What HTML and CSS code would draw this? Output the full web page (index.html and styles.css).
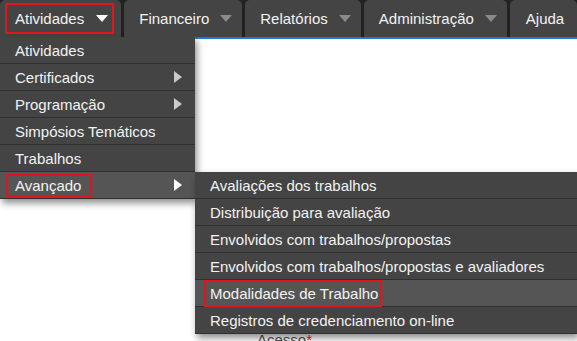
FILE: index.html
```html
<!DOCTYPE html>
<html>
<head>
    <meta charset="utf-8" />
    <title>Menu</title>
    <link rel="stylesheet" href="styles.css">
</head>
<body>
<div class="topbar">
    <ul class="tabs">
        <li class="tab open">
            <span class="hl hl-tab">Atividades <i class="caret"></i></span>
            <ul class="dropdown">
                <li>Atividades</li>
                <li>Certificados <i class="arrow"></i></li>
                <li>Programação <i class="arrow"></i></li>
                <li>Simpósios Temáticos</li>
                <li>Trabalhos</li>
                <li class="active"><span class="hl hl-adv">Avançado</span> <i class="arrow"></i>
                    <ul class="submenu">
                        <li>Avaliações dos trabalhos</li>
                        <li>Distribuição para avaliação</li>
                        <li>Envolvidos com trabalhos/propostas</li>
                        <li>Envolvidos com trabalhos/propostas e avaliadores</li>
                        <li class="active"><span class="hl hl-mod">Modalidades de Trabalho</span></li>
                        <li>Registros de credenciamento on-line</li>
                    </ul>
                </li>
            </ul>
        </li>
        <li class="tab">Financeiro <i class="caret dim"></i></li>
        <li class="tab">Relatórios <i class="caret dim"></i></li>
        <li class="tab">Administração <i class="caret dim"></i></li>
        <li class="tab last">Ajuda</li>
    </ul>
</div>
<div class="content">
    <label class="field-label">Acesso<span class="req">*</span></label>
</div>
</body>
</html>
```

FILE: styles.css
```css
body{
    margin: 0px;
    background: #fff;
    font-family: "Liberation Sans", Arial, sans-serif;
    font-size: 15px;
}
ul{
    list-style: none;
    margin: 0;
    padding: 0;
}
.topbar{
    background: #222;
    height: 37px;
    border-bottom: 2px solid #1f78d1;
}
.tabs{
    display: flex;
    gap: 3px;
    height: 37px;
}
.tab{
    position: relative;
    display: flex;
    align-items: center;
    background: #444;
    color: #f2f2f2;
    border-radius: 5px 5px 0 0;
    padding: 0 10px 0 15px;
    line-height: 17px;
    white-space: nowrap;
}
.tab.open{
    padding-right: 13px;
}
.tab.last{
    flex: 1;
    padding-left: 16px;
}
.caret{
    display: inline-block;
    width: 0;
    height: 0;
    border-left: 6px solid transparent;
    border-right: 6px solid transparent;
    border-top: 7px solid #fff;
    margin-left: 11px;
    vertical-align: middle;
}
.caret.dim{
    border-top-color: #8a8a8a;
}
.hl{
    border: 2px solid #e3141c;
}
.hl-tab{
    display: flex;
    align-items: center;
    padding: 5px 4px 5px 8px;
    margin: 0 -6px 0 -10px;
}
.hl-tab .caret{
    margin-left: 12px;
}
.dropdown{
    position: absolute;
    top: 37px;
    left: 0;
    width: 195px;
    background: #444;
    box-shadow: 2px 4px 7px rgba(0,0,0,0.45);
}
.dropdown li{
    position: relative;
    display: flex;
    align-items: center;
    justify-content: space-between;
    height: 26px;
    padding: 0 13px 0 15px;
    border-bottom: 1px solid #303030;
    color: #f2f2f2;
    line-height: 17px;
}
.dropdown li.active{
    background: #555;
}
.arrow{
    display: inline-block;
    width: 0;
    height: 0;
    border-top: 6px solid transparent;
    border-bottom: 6px solid transparent;
    border-left: 8px solid #c8c8c8;
}
.active > .arrow{
    border-left-color: #fff;
}
.hl-adv{
    padding: 1px 9px 1px 7px;
    margin-left: -9px;
}
.submenu{
    position: absolute;
    top: 0;
    left: 195px;
    width: 382px;
    background: #444;
    box-shadow: 2px 4px 7px rgba(0,0,0,0.45);
}
.dropdown .submenu li{
    padding: 0 15px;
    justify-content: flex-start;
}
.hl-mod{
    display: flex;
    align-items: center;
    height: 23px;
    padding: 0 2px 0 4px;
    margin-left: -6px;
}
.content{
    padding: 292px 0 0 257px;
}
.field-label{
    color: #555;
    line-height: 17px;
}
.req{
    color: #d9231c;
}
```
